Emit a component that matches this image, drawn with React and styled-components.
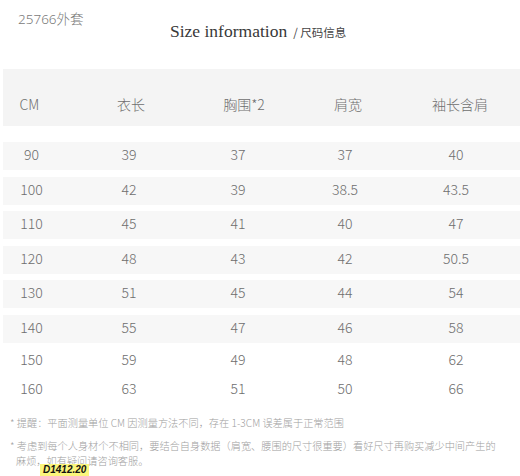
import styled, { createGlobalStyle } from "styled-components";

const GlobalStyle = createGlobalStyle`
  html, body {
    margin: 0;
    padding: 0;
    background: #ffffff;
  }
  body {
    font-family: "Noto Sans", "Noto Sans CJK SC", sans-serif;
  }
`;

const Page = styled.div`
  position: relative;
  width: 520px;
  height: 476px;
  overflow: hidden;
  background: #fff;
`;

const Head = styled.header`
  display: grid;
  grid-template-columns: 152px auto;
  padding: 9px 0 0 18px;
  height: 69px;
  box-sizing: border-box;
`;

const Code = styled.div`
  font-size: 13.5px;
  line-height: 20px;
  color: #7a7a7a;
  font-family: "Noto Sans", "Noto Sans CJK SC", sans-serif;
  font-weight: 300;
`;

const Title = styled.h1`
  margin: 11px 0 0;
  font-family: "Liberation Serif", serif;
  font-weight: 400;
  font-size: 17.5px;
  line-height: 22px;
  color: #383838;
  white-space: nowrap;

  small {
    font-family: "Noto Sans CJK SC", sans-serif;
    font-size: 11.5px;
    margin-left: 6px;
    color: #444;
  }
`;

const Table = styled.div`
  display: flex;
  flex-direction: column;
  padding-left: 3px;
`;

const Row = styled.div`
  display: grid;
  grid-template-columns: 57px 138px 80px 134px 88px;
  align-items: center;
  height: ${(p) => p.$h}px;
  margin-top: ${(p) => p.$mt || 0}px;
  padding: ${(p) => p.$pt || 0}px 0 ${(p) => p.$pb || 0}px;
  box-sizing: border-box;
  background: ${(p) => p.$bg || "transparent"};
  color: #6e6e6e;
  font-family: "Noto Sans CJK SC", "Noto Sans", sans-serif;
  font-weight: 300;
  font-size: 14px;
`;

const Cell = styled.span`
  text-align: center;
  transform: translateX(${(p) => p.$dx || 0}px);
`;

const Notes = styled.div`
  margin-top: 11px;
  padding: 0 20px 0 10px;
  color: #a0a0a0;
  font-family: "Noto Sans CJK SC", sans-serif;
  font-weight: 300;
  font-size: 10.2px;
`;

const Note = styled.p`
  margin: 0 0 6px;
  padding-left: 6px;
  text-indent: -6px;
  line-height: ${(p) => p.$lh || 18}px;
`;

const Badge = styled.span`
  position: absolute;
  left: 40px;
  top: 464px;
  padding: 0 3px;
  height: 12px;
  line-height: 12px;
  background: #fbf57c;
  color: #111;
  font-family: "Liberation Sans", Arial, sans-serif;
  font-style: italic;
  font-weight: 700;
  font-size: 10px;
`;

const header = ["CM", "衣长", "胸围*2", "肩宽", "袖长含肩"];
const headerShift = [-2, 2, 6, 3, 4];

const rows = [
  ["90", "39", "37", "37", "40"],
  ["100", "42", "39", "38.5", "43.5"],
  ["110", "45", "41", "40", "47"],
  ["120", "48", "43", "42", "50.5"],
  ["130", "51", "45", "44", "54"],
  ["140", "55", "47", "46", "58"],
  ["150", "59", "49", "48", "62"],
  ["160", "63", "51", "50", "66"],
];

export default function App() {
  return (
    <Page>
      <GlobalStyle />
      <Head>
        <Code>25766外套</Code>
        <Title>
          Size information<small>/ 尺码信息</small>
        </Title>
      </Head>
      <Table>
        <Row $h={57} $pt={12} $bg="#f4f4f4">
          {header.map((h, i) => (
            <Cell key={h} $dx={headerShift[i]}>
              {h}
            </Cell>
          ))}
        </Row>
        {rows.map((r, i) => {
          const banded = i < 6;
          return (
            <Row
              key={r[0]}
              $h={banded ? 28 : 29}
              $pb={banded ? 4 : 0}
              $mt={i === 0 ? 16 : banded ? 6.6 : i === 6 ? 2 : 0}
              $bg={banded ? "#f7f7f7" : null}
            >
              {r.map((v, j) => (
                <Cell key={j}>{v}</Cell>
              ))}
            </Row>
          );
        })}
      </Table>
      <Notes>
        <Note>* 提醒：平面测量单位 CM 因测量方法不同，存在 1-3CM 误差属于正常范围</Note>
        <Note $lh={15}>
          * 考虑到每个人身材个不相同，要结合自身数据（肩宽、腰围的尺寸很重要）看好尺寸再购买减少中间产生的麻烦，如有疑问请咨询客服。
        </Note>
      </Notes>
      <Badge>D1412.20</Badge>
    </Page>
  );
}
